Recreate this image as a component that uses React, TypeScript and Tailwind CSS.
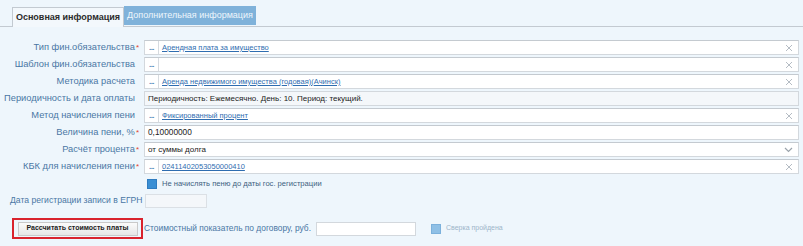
import React from "react";

const F = { fontFamily: '"Liberation Sans", Arial, sans-serif' };

function Dots() {
  return (
    <div className="w-[14px] h-full border-r border-[#d6dbe0] flex items-end justify-center pb-[2px] shrink-0">
      <span className="text-[#4f86b8] text-[8px] font-bold leading-none tracking-[-0.5px]">...</span>
    </div>
  );
}

function XIcon() {
  return (
    <svg width="8" height="8" viewBox="0 0 8 8" className="shrink-0 mr-[5px]">
      <path d="M1 1 L7 7 M7 1 L1 7" stroke="#b5bcc4" strokeWidth="1" />
    </svg>
  );
}

function Chevron() {
  return (
    <svg width="9" height="6" viewBox="0 0 9 6" className="shrink-0 mr-[5px]">
      <path d="M1 1 L4.5 4.5 L8 1" stroke="#9aa3ab" strokeWidth="1.2" fill="none" />
    </svg>
  );
}

function Label({ text, req }: { text: string; req?: boolean }) {
  return (
    <div className="w-[141px] shrink-0 text-right pr-[2px] text-[9.3px] text-[#4a77a4] leading-[15px] whitespace-nowrap">
      {text}
      {req ? <span className="text-[#e0402f] text-[8px] align-top ml-[1px]">*</span> : <span className="inline-block w-[4px]" />}
    </div>
  );
}

function Box({ children }: { children?: React.ReactNode }) {
  return (
    <div className="ml-[3px] w-[655px] h-[15px] bg-white border border-[#d3d8dd] border-t-[#c4cad0] flex items-center">
      {children}
    </div>
  );
}

function Row({ label, req, children }: { label: string; req?: boolean; children?: React.ReactNode }) {
  return (
    <div className="flex items-center h-[17px]">
      <Label text={label} req={req} />
      {children}
    </div>
  );
}

function Link({ text }: { text: string }) {
  return <span className="ml-[3px] text-[7.5px] text-[#2f6db0] underline leading-none whitespace-nowrap">{text}</span>;
}

export default function App() {
  return (
    <div className="w-[803px] h-[246px] bg-[#eef6fc] overflow-hidden relative" style={F}>
      <div className="h-[27px] flex items-end pl-[12px] border-b border-[#c3cad1]">
        <div className="h-[20px] w-[112px] bg-[#f3f8fc] border border-b-0 border-[#c3cad1] flex items-center justify-center text-[9px] font-bold text-[#2b2b2b] whitespace-nowrap -mb-px">
          Основная информация
        </div>
        <div className="h-[19px] w-[132px] bg-[#7fb2da] flex items-center justify-center text-[9px] text-[#eef6fc] whitespace-nowrap mb-px">
          Дополнительная информация
        </div>
      </div>
      <div className="pt-[12px]">
        <Row label="Тип фин.обязательства" req>
          <Box>
            <Dots />
            <Link text="Арендная плата за имущество" />
            <div className="flex-1" />
            <XIcon />
          </Box>
        </Row>
        <Row label="Шаблон фин.обязательства">
          <Box>
            <Dots />
            <div className="flex-1" />
            <XIcon />
          </Box>
        </Row>
        <Row label="Методика расчета">
          <Box>
            <Dots />
            <Link text="Аренда недвижимого имущества (годовая)(Ачинск)" />
            <div className="flex-1" />
            <XIcon />
          </Box>
        </Row>
        <Row label="Периодичность и дата оплаты">
          <div className="ml-[3px] w-[655px] h-[15px] bg-[#f4f7fa] border border-[#d3d8dd] flex items-center">
            <span className="ml-[3px] text-[8px] text-[#222] whitespace-nowrap">
              Периодичность: Ежемесячно. День: 10. Период: текущий.
            </span>
          </div>
        </Row>
        <Row label="Метод начисления пени">
          <Box>
            <Dots />
            <Link text="Фиксированный процент" />
            <div className="flex-1" />
            <XIcon />
          </Box>
        </Row>
        <Row label="Величина пени, %" req>
          <Box>
            <span className="ml-[3px] text-[8.3px] text-[#222]">0,10000000</span>
          </Box>
        </Row>
        <Row label="Расчёт процента" req>
          <Box>
            <span className="ml-[3px] text-[8px] text-[#222]">от суммы долга</span>
            <div className="flex-1" />
            <Chevron />
          </Box>
        </Row>
        <Row label="КБК для начисления пени" req>
          <Box>
            <Dots />
            <Link text="02411402053050000410" />
            <div className="flex-1" />
            <XIcon />
          </Box>
        </Row>
        <div className="flex items-center h-[17px] pl-[147px]">
          <div className="w-[10px] h-[10px] bg-[#3a8fd4] border border-[#2f7cc0]" />
          <span className="ml-[5px] text-[7.6px] text-[#3d5f80] whitespace-nowrap">Не начислять пеню до даты гос. регистрации</span>
        </div>
        <div className="flex items-center h-[17px]">
          <div className="w-[145px] shrink-0 pl-[10px] text-[8.6px] text-[#4a77a4] whitespace-nowrap">Дата регистрации записи в ЕГРН</div>
          <div className="w-[62px] h-[14px] bg-[#f4f7fa] border border-[#dbe0e5]" />
        </div>
        <div className="flex items-center mt-[9px] h-[21px]">
          <div className="ml-[12px] w-[131px] h-[21px] border-2 border-[#d9232d] flex items-center justify-center">
            <div className="w-[120px] h-[14px] bg-gradient-to-b from-[#fbfbfb] to-[#e6e6e6] border border-[#c9c9c9] flex items-center justify-center text-[7px] font-bold text-[#222] whitespace-nowrap">
              Рассчитать стоимость платы
            </div>
          </div>
          <span className="ml-[1px] text-[8.4px] text-[#4a77a4] whitespace-nowrap">Стоимостный показатель по договору, руб.</span>
          <div className="ml-[5px] w-[100px] h-[14px] bg-white border border-[#d3d8dd]" />
          <div className="ml-[15px] w-[10px] h-[10px] bg-[#8fc0e6] border border-[#7cb1dc]" />
          <span className="ml-[5px] text-[7px] text-[#9db5c9] whitespace-nowrap">Сверка пройдена</span>
        </div>
      </div>
    </div>
  );
}
